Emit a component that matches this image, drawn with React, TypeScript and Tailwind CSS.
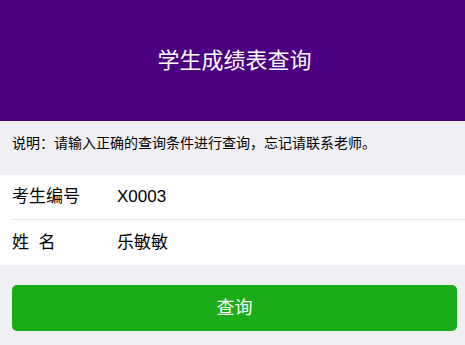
export default function App() {
  const font = { fontFamily: '"Liberation Sans", "Noto Sans CJK SC", sans-serif' }
  return (
    <div className="w-[465px] h-[345px] bg-[#efeff4] overflow-hidden" style={font}>
      {/* Header */}
      <div className="h-[121px] bg-[#4b0082] flex items-center justify-center pl-1">
        <h1 className="text-[22px] text-white font-normal leading-none">学生成绩表查询</h1>
      </div>

      {/* Notice */}
      <div className="h-[54px] px-3 pt-3">
        <p className="text-[14px] leading-[21px] text-black">说明：请输入正确的查询条件进行查询，忘记请联系老师。</p>
      </div>

      {/* Form */}
      <div className="bg-white">
        <div className="ml-3 h-[45px] flex items-center border-b border-[#e5e5e5]">
          <span className="w-[105px] text-[17px] text-black">考生编号</span>
          <span className="text-[17px] text-black">X0003</span>
        </div>
        <div className="ml-3 h-[45px] flex items-center">
          <span className="w-[105px] text-[17px] text-black">姓&nbsp;&nbsp;名</span>
          <span className="text-[17px] text-black">乐敏敏</span>
        </div>
      </div>

      {/* Button */}
      <div className="pt-[20px] pl-3 pr-2">
        <button className="w-full h-[46px] rounded-[5px] bg-[#1aad19] text-white text-[18px] flex items-center justify-center">
          查询
        </button>
      </div>
    </div>
  )
}
